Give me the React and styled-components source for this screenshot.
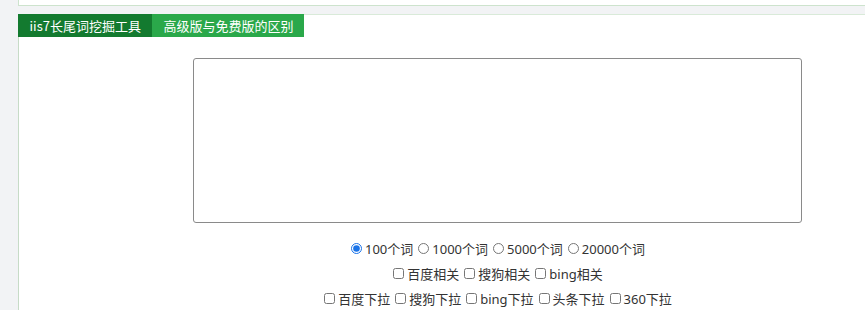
import React from 'react'
import styled, { createGlobalStyle } from 'styled-components'

const GlobalStyle = createGlobalStyle`
	html, body {
		margin: 0;
		padding: 0;
		background: #f2f3f5;
		overflow: hidden;
	}
	body {
		font-family: "Noto Sans", "Noto Sans CJK SC", sans-serif;
		color: #333;
	}
`;

const Page = styled.div`
	padding-left: 18px;
	height: 310px;
	overflow: hidden;
`;

const TopPanel = styled.div`
	width: 958px;
	height: 5px;
	background: #fff;
	border: 1px solid #cde3cd;
	border-top: none;
`;

const MainPanel = styled.div`
	width: 958px;
	margin-top: 8px;
	background: #fff;
	border-left: 1px solid #c7dbc7;
	border-top: 1px solid #d9ead9;
	height: 300px;
`;

const Tabs = styled.div`
	display: flex;
	margin-left: -1px;
	margin-top: -1px;
`;

const Tab = styled.div`
	height: 23px;
	line-height: 23px;
	padding: 0 ${p => (p.active ? '11.5px' : '11px')};
	font-size: 13px;
	color: #fff;
	background: ${p => (p.active ? '#137a2f' : '#2aa84a')};
	font-family: "Noto Sans CJK SC", sans-serif;
`;

const Body = styled.div`
	display: flex;
	flex-direction: column;
	align-items: center;
	padding-top: 21px;
	padding-right: 2px;
`;

const Words = styled.textarea`
	width: 609px;
	height: 165px;
	box-sizing: border-box;
	border: 1px solid #8a8a8a;
	border-radius: 3px;
	resize: none;
	outline: none;
	margin: 0;
`;

const Options = styled.div`
	margin-top: 13px;
	display: flex;
	flex-direction: column;
	align-items: center;
	padding-left: 2px;
`;

const Row = styled.div`
	display: flex;
	align-items: center;
	gap: 5px;
	height: 25px;
	font-size: 13px;
	font-family: "Noto Sans", "Noto Sans CJK SC", sans-serif;
`;

const Choice = styled.label`
	display: flex;
	align-items: center;
	gap: 3px;
	input {
		margin: 0;
		width: 11px;
		height: 11px;
	}
	input[type="radio"] {
		accent-color: #1a73e8;
	}
`;

const sizes = ['100个词', '1000个词', '5000个词', '20000个词']
const related = ['百度相关', '搜狗相关', 'bing相关']
const dropdowns = ['百度下拉', '搜狗下拉', 'bing下拉', '头条下拉', '360下拉']

const App = () => {
  return (
    <>
      <GlobalStyle />
      <Page>
        <TopPanel />
        <MainPanel>
          <Tabs>
            <Tab active>iis7长尾词挖掘工具</Tab>
            <Tab>高级版与免费版的区别</Tab>
          </Tabs>
          <Body>
            <Words />
            <Options>
              <Row>
                {sizes.map((s, i) => (
                  <Choice key={s}>
                    <input type="radio" name="size" defaultChecked={i === 0} />
                    {s}
                  </Choice>
                ))}
              </Row>
              <Row>
                {related.map(s => (
                  <Choice key={s}>
                    <input type="checkbox" />
                    {s}
                  </Choice>
                ))}
              </Row>
              <Row>
                {dropdowns.map(s => (
                  <Choice key={s}>
                    <input type="checkbox" />
                    {s}
                  </Choice>
                ))}
              </Row>
            </Options>
          </Body>
        </MainPanel>
      </Page>
    </>
  )
}

export default App
